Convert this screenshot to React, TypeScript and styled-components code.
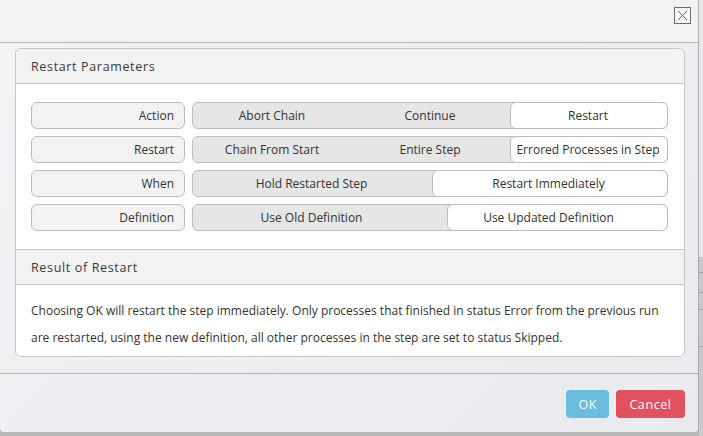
import React from "react";
import styled, { createGlobalStyle } from "styled-components";

const Global = createGlobalStyle`
  html, body { margin: 0; padding: 0; }
  body {
    background: #c5c7ca;
    font-family: "Open Sans", "Noto Sans", sans-serif;
    color: #333;
    overflow: hidden;
  }
`;

const Page = styled.div`
  display: flex;
  width: 703px;
  height: 436px;
  background: #b7b8ba;
`;

const Dialog = styled.div`
  width: 699px;
  height: 432px;
  box-sizing: border-box;
  border-right: 1px solid #a9abad;
  border-bottom-left-radius: 4px;
  border-bottom-right-radius: 4px;
  background: linear-gradient(135deg, #f1f3f5 0%, #e8eaee 100%);
  display: flex;
  flex-direction: column;
  flex: none;
`;

const TitleBar = styled.div`
  background: #f2f2f2;
  border-bottom: 1px solid #b4b4b4;
  display: flex;
  justify-content: flex-end;
  align-items: flex-start;
  padding: 7px 7px 0 0;
  height: 35px;
`;

const CloseBox = styled.button`
  width: 17px;
  height: 17px;
  padding: 0;
  border: 1px solid #6e6e6e;
  background: #f7f7f7;
  display: flex;
  align-items: center;
  justify-content: center;
  cursor: pointer;
`;

const Body = styled.div`
  flex: 1;
  padding: 5px 13px 0 15px;
  border-bottom: 1px solid #b4b4b4;
`;

const Panel = styled.div`
  border: 1px solid #c6c6c6;
  border-radius: 6px;
  background: #fff;
  overflow: hidden;
`;

const PanelHeader = styled.div<{ $top?: boolean }>`
  height: 34px;
  background: #f2f2f2;
  border-bottom: 1px solid #c6c6c6;
  border-top: ${(p) => (p.$top ? "none" : "1px solid #c6c6c6")};
  display: flex;
  align-items: center;
  padding-left: 15px;
  font-size: 12.5px;
  letter-spacing: 0.65px;
  color: #3a3a3a;
`;

const ParamsBody = styled.div`
  padding: 18px 16px 18px 15px;
  display: flex;
  flex-direction: column;
  gap: 7px;
`;

const Row = styled.div`
  display: flex;
  gap: 7px;
  height: 27px;
`;

const Label = styled.div`
  width: 154px;
  box-sizing: border-box;
  background: #f2f2f2;
  border: 1px solid #bdbdbd;
  border-radius: 6px;
  display: flex;
  align-items: center;
  justify-content: flex-end;
  padding-right: 10px;
  font-size: 12px;
  color: #333;
`;

const Group = styled.div`
  position: relative;
  flex: 1;
  box-sizing: border-box;
  background: #e6e6e6;
  border: 1px solid #bdbdbd;
  border-radius: 6px;
  display: flex;
`;

const Indicator = styled.div`
  position: absolute;
  top: -1px;
  bottom: -1px;
  right: -1px;
  background: #fff;
  border: 1px solid #bdbdbd;
  border-radius: 6px;
`;

const Segment = styled.div`
  position: relative;
  flex: 1 1 0;
  display: flex;
  align-items: center;
  justify-content: center;
  font-size: 12px;
  color: #333;
  white-space: nowrap;
`;

const ResultText = styled.p`
  margin: 0;
  padding: 12px 16px 5px 15px;
  font-size: 12px;
  line-height: 27px;
  color: #333;
`;

const Footer = styled.div`
  height: 58px;
  display: flex;
  justify-content: flex-end;
  align-items: flex-start;
  gap: 7px;
  padding: 16px 13px 0 0;
  box-sizing: border-box;
`;

const Btn = styled.button<{ $variant: "ok" | "cancel" }>`
  height: 28px;
  border: none;
  border-radius: 4px;
  padding: 0 12px;
  font-family: "Open Sans", "Noto Sans", sans-serif;
  font-size: 12.5px;
  letter-spacing: 0.6px;
  color: #fff;
  background: ${(p) => (p.$variant === "ok" ? "#6bbddd" : "#e1515e")};
  min-width: ${(p) => (p.$variant === "ok" ? "32px" : "69px")};
`;

const Backdrop = styled.div`
  flex: 1;
  display: flex;
  flex-direction: column;
  height: 436px;
`;

const BackdropTop = styled.div`
  height: 257px;
  background: #e7e9ec;
`;

const BackdropLine = styled.div<{ $h: number }>`
  height: ${(p) => p.$h}px;
  border-bottom: 1px solid #9fa1a4;
  background: #c8cacd;
`;

const BackdropRest = styled.div`
  flex: 1;
  background: #c8cacd;
`;

type Param = {
  label: string;
  options: string[];
  selLeft: number;
};

const params: Param[] = [
  { label: "Action", options: ["Abort Chain", "Continue", "Restart"], selLeft: 318 },
  { label: "Restart", options: ["Chain From Start", "Entire Step", "Errored Processes in Step"], selLeft: 318 },
  { label: "When", options: ["Hold Restarted Step", "Restart Immediately"], selLeft: 240 },
  { label: "Definition", options: ["Use Old Definition", "Use Updated Definition"], selLeft: 255 },
];

export default function App() {
  return (
    <>
      <Global />
      <Page>
        <Dialog>
          <TitleBar>
            <CloseBox aria-label="Close">
              <svg width="11" height="11" viewBox="0 0 11 11">
                <path d="M1 1 L10 10 M10 1 L1 10" stroke="#666" strokeWidth="1" fill="none" />
              </svg>
            </CloseBox>
          </TitleBar>
          <Body>
            <Panel>
              <PanelHeader $top>Restart Parameters</PanelHeader>
              <ParamsBody>
                {params.map((p) => (
                  <Row key={p.label}>
                    <Label>{p.label}</Label>
                    <Group>
                      <Indicator style={{ left: p.selLeft - 1 }} />
                      {p.options.map((o) => (
                        <Segment key={o}>{o}</Segment>
                      ))}
                    </Group>
                  </Row>
                ))}
              </ParamsBody>
              <PanelHeader>Result of Restart</PanelHeader>
              <ResultText>
                Choosing OK will restart the step immediately. Only processes that finished in status Error from the previous run are restarted, using the new definition, all other processes in the step are set to status Skipped.
              </ResultText>
            </Panel>
          </Body>
          <Footer>
            <Btn $variant="ok">OK</Btn>
            <Btn $variant="cancel">Cancel</Btn>
          </Footer>
        </Dialog>
        <Backdrop>
          <BackdropTop />
          <BackdropLine $h={15} />
          <BackdropLine $h={19} />
          <BackdropLine $h={16} />
          <BackdropLine $h={36} />
          <BackdropRest />
        </Backdrop>
      </Page>
    </>
  );
}
